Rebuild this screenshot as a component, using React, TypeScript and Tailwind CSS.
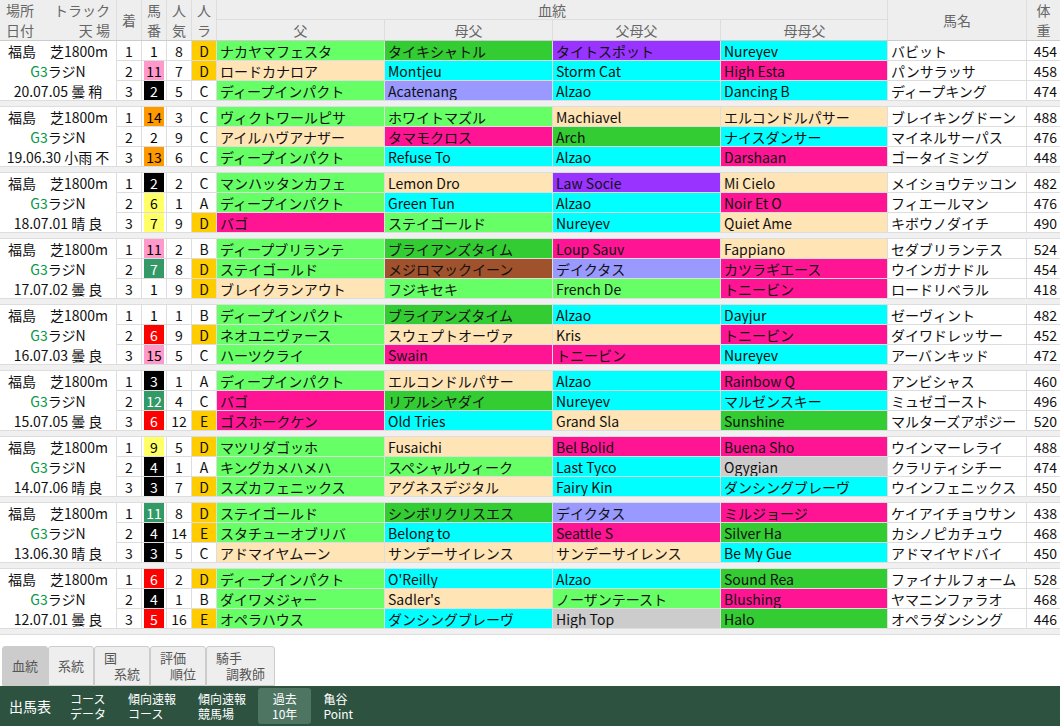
const COL: Record<string, string> = {
  G: "bg-[#66ff66]", D: "bg-[#33cc33]", P: "bg-[#9933ff]", C: "bg-[#00ffff]", K: "bg-[#ff1493]",
  O: "bg-[#ffe4b5]", B: "bg-[#9999ff]", R: "bg-[#a0522d]", Y: "bg-[#cccccc]",
};
const NUM: Record<string, string> = {
  w: "bg-white text-black", k: "bg-black text-white", p: "bg-[#ff99cc] text-black", o: "bg-[#ff9900] text-black",
  y: "bg-[#ffff66] text-black", g: "bg-[#339966] text-white", r: "bg-[#ff0000] text-white",
};
type Row = [string, string, string, string, string, [string, string][], string, string];
type Blk = { date: string; rows: Row[] };
const blocks: Blk[] = [
  { date: "20.07.05 曇 稍", rows: [
    ["1","1","w","8","D",[["ナカヤマフェスタ","G"],["タイキシャトル","D"],["タイトスポット","P"],["Nureyev","C"]],"バビット","454"],
    ["2","11","p","7","D",[["ロードカナロア","O"],["Montjeu","C"],["Storm Cat","C"],["High Esta","K"]],"パンサラッサ","458"],
    ["3","2","k","5","C",[["ディープインパクト","G"],["Acatenang","B"],["Alzao","C"],["Dancing B","C"]],"ディープキング","474"]]},
  { date: "19.06.30 小雨 不", rows: [
    ["1","14","o","3","C",[["ヴィクトワールピサ","G"],["ホワイトマズル","G"],["Machiavel","O"],["エルコンドルパサー","O"]],"ブレイキングドーン","488"],
    ["2","2","w","9","C",[["アイルハヴアナザー","O"],["タマモクロス","K"],["Arch","D"],["ナイスダンサー","C"]],"マイネルサーパス","476"],
    ["3","13","o","6","C",[["ディープインパクト","G"],["Refuse To","C"],["Alzao","C"],["Darshaan","K"]],"ゴータイミング","448"]]},
  { date: "18.07.01 晴 良", rows: [
    ["1","2","k","2","C",[["マンハッタンカフェ","G"],["Lemon Dro","O"],["Law Socie","P"],["Mi Cielo","O"]],"メイショウテッコン","482"],
    ["2","6","y","1","A",[["ディープインパクト","G"],["Green Tun","C"],["Alzao","C"],["Noir Et O","K"]],"フィエールマン","476"],
    ["3","7","y","9","D",[["バゴ","K"],["ステイゴールド","G"],["Nureyev","C"],["Quiet Ame","O"]],"キボウノダイチ","490"]]},
  { date: "17.07.02 曇 良", rows: [
    ["1","11","p","2","B",[["ディープブリランテ","G"],["ブライアンズタイム","D"],["Loup Sauv","K"],["Fappiano","O"]],"セダブリランテス","524"],
    ["2","7","g","8","D",[["ステイゴールド","G"],["メジロマックイーン","R"],["デイクタス","B"],["カツラギエース","K"]],"ウインガナドル","454"],
    ["3","1","w","9","D",[["ブレイクランアウト","O"],["フジキセキ","G"],["French De","G"],["トニービン","K"]],"ロードリベラル","418"]]},
  { date: "16.07.03 曇 良", rows: [
    ["1","1","w","1","B",[["ディープインパクト","G"],["ブライアンズタイム","D"],["Alzao","C"],["Dayjur","C"]],"ゼーヴィント","482"],
    ["2","6","r","9","D",[["ネオユニヴァース","G"],["スウェプトオーヴァ","O"],["Kris","O"],["トニービン","K"]],"ダイワドレッサー","452"],
    ["3","15","p","5","C",[["ハーツクライ","G"],["Swain","K"],["トニービン","K"],["Nureyev","C"]],"アーバンキッド","472"]]},
  { date: "15.07.05 曇 良", rows: [
    ["1","3","k","1","A",[["ディープインパクト","G"],["エルコンドルパサー","O"],["Alzao","C"],["Rainbow Q","K"]],"アンビシャス","460"],
    ["2","12","g","4","C",[["バゴ","K"],["リアルシヤダイ","D"],["Nureyev","C"],["マルゼンスキー","C"]],"ミュゼゴースト","496"],
    ["3","6","r","12","E",[["ゴスホークケン","K"],["Old Tries","C"],["Grand Sla","O"],["Sunshine","D"]],"マルターズアポジー","520"]]},
  { date: "14.07.06 晴 良", rows: [
    ["1","9","y","5","D",[["マツリダゴッホ","G"],["Fusaichi","O"],["Bel Bolid","K"],["Buena Sho","K"]],"ウインマーレライ","488"],
    ["2","4","k","1","A",[["キングカメハメハ","G"],["スペシャルウィーク","G"],["Last Tyco","C"],["Ogygian","Y"]],"クラリティシチー","474"],
    ["3","3","k","7","D",[["スズカフェニックス","G"],["アグネスデジタル","O"],["Fairy Kin","C"],["ダンシングブレーヴ","C"]],"ウインフェニックス","450"]]},
  { date: "13.06.30 晴 良", rows: [
    ["1","11","g","8","D",[["ステイゴールド","G"],["シンボリクリスエス","D"],["デイクタス","B"],["ミルジョージ","K"]],"ケイアイチョウサン","438"],
    ["2","4","k","14","E",[["スタチューオブリバ","G"],["Belong to","C"],["Seattle S","K"],["Silver Ha","D"]],"カシノピカチュウ","468"],
    ["3","3","k","5","C",[["アドマイヤムーン","O"],["サンデーサイレンス","O"],["サンデーサイレンス","O"],["Be My Gue","C"]],"アドマイヤドバイ","450"]]},
  { date: "12.07.01 曇 良", rows: [
    ["1","6","r","2","D",[["ディープインパクト","G"],["O'Reilly","C"],["Alzao","C"],["Sound Rea","D"]],"ファイナルフォーム","528"],
    ["2","4","k","1","B",[["ダイワメジャー","G"],["Sadler's","O"],["ノーザンテースト","G"],["Blushing","K"]],"ヤマニンファラオ","468"],
    ["3","5","r","16","E",[["オペラハウス","G"],["ダンシングブレーヴ","C"],["High Top","Y"],["Halo","D"]],"オペラダンシング","446"]]},
];
const GRID = "grid grid-cols-[117px_25px_25px_25px_25px_168px_168px_168px_167px_139px_33px]";
const F = { fontFamily: '"Noto Sans CJK JP","Noto Sans",sans-serif' };

export default function App() {
  return (
    <div className="w-[1060px] h-[726px] bg-white flex flex-col text-[14px] text-[#111] overflow-hidden" style={F}>
      <div className={`${GRID} h-[41px] bg-[#eeeeee] text-[#666] border-b border-[#ccc] leading-[20px]`}>
        <div className="flex flex-col px-[6px] border-r border-[#ddd]">
          <div className="flex justify-between"><span>場所</span><span>トラック</span></div>
          <div className="flex justify-between"><span>日付</span><span>天 場</span></div>
        </div>
        <div className="flex items-center justify-center border-r border-[#ddd]">着</div>
        <div className="flex flex-col items-center justify-center border-r border-[#ddd]"><span>馬</span><span>番</span></div>
        <div className="flex flex-col items-center justify-center border-r border-[#ddd]"><span>人</span><span>気</span></div>
        <div className="flex flex-col items-center justify-center border-r border-[#ddd]"><span>人</span><span>ラ</span></div>
        <div className="col-span-4 flex flex-col border-r border-[#ddd]">
          <div className="h-[20px] text-center border-b border-[#ddd]">血統</div>
          <div className="grid grid-cols-[168px_168px_168px_167px] h-[20px]">
            {["父","母父","父母父","母母父"].map((t) => <div key={t} className="text-center border-r border-[#ddd] last:border-r-0">{t}</div>)}
          </div>
        </div>
        <div className="flex items-center justify-center border-r border-[#ddd]">馬名</div>
        <div className="flex flex-col items-center justify-center"><span>体</span><span>重</span></div>
      </div>
      {blocks.map((b, bi) => (
        <div key={bi} className="flex flex-col">
          <div className={`${GRID} grid-rows-[20px_20px_20px] leading-[20px]`}>
            <div className="row-span-3 flex flex-col items-center justify-center border-r border-b border-[#ddd]">
              <span>福島　芝1800m</span>
              <span><span className="text-[#009944]">G3</span>ラジN</span>
              <span>{b.date}</span>
            </div>
            {b.rows.map((r, ri) => (
              <div key={ri} className="contents">
                <div className="h-[20px] text-center border-r border-b border-[#ddd]">{r[0]}</div>
                <div className="h-[20px] border-r border-b border-[#ddd] flex justify-center">
                  <span className={`w-[20px] h-[19px] text-center ${NUM[r[2]]}`}>{r[1]}</span>
                </div>
                <div className="h-[20px] text-center border-r border-b border-[#ddd]">{r[3]}</div>
                <div className={`h-[20px] text-center border-r border-b border-[#ddd] ${r[4] === "D" || r[4] === "E" ? "bg-[#ffcc00]" : ""}`}>{r[4]}</div>
                {r[5].map(([t, c], ci) => (
                  <div key={ci} className={`h-[20px] px-[3px] border-r border-b border-[#ddd] whitespace-nowrap overflow-hidden ${COL[c]}`}>{t}</div>
                ))}
                <div className="h-[20px] px-[3px] border-r border-b border-[#ddd] whitespace-nowrap overflow-hidden">{r[6]}</div>
                <div className="h-[20px] text-right pr-[3px] border-b border-[#ddd]">{r[7]}</div>
              </div>
            ))}
          </div>
          <div className="h-[6px] bg-[#f0f0f0] border-b border-[#ddd]" />
        </div>
      ))}
      <div className="flex-1" />
      <div className="flex h-[40px] pl-[2px] items-end">
        {[["血統"],["系統"],["国","系統"],["評価","順位"],["騎手","調教師"]].map((t, i) => (
          <div key={i} className={`h-[40px] px-[9px] flex flex-col justify-center leading-[16px] text-[13px] text-[#555] border border-[#ccc] rounded-t-[3px] ${i === 0 ? "bg-[#cccccc]" : "bg-[#eeeeee]"}`}>
            {t.length === 1 ? <span>{t[0]}</span> : <><span>{t[0]}</span><span className="pl-[10px]">{t[1]}</span></>}
          </div>
        ))}
      </div>
      <div className="h-[40px] bg-[#2d5340] flex items-center text-white text-[12px] leading-[15px] px-[2px] gap-[2px]">
        <div className="px-[7px] text-[14px]">出馬表</div>
        {[["コース","データ"],["傾向速報","コース"],["傾向速報","競馬場"],["過去","10年"],["亀谷","Point"]].map((t, i) => (
          <div key={i} className={`h-[36px] px-[10px] flex flex-col justify-center rounded-[3px] ${i === 3 ? "bg-[#4e7462] items-center px-[14px]" : ""}`}>
            <span>{t[0]}</span><span>{t[1]}</span>
          </div>
        ))}
      </div>
    </div>
  );
}
